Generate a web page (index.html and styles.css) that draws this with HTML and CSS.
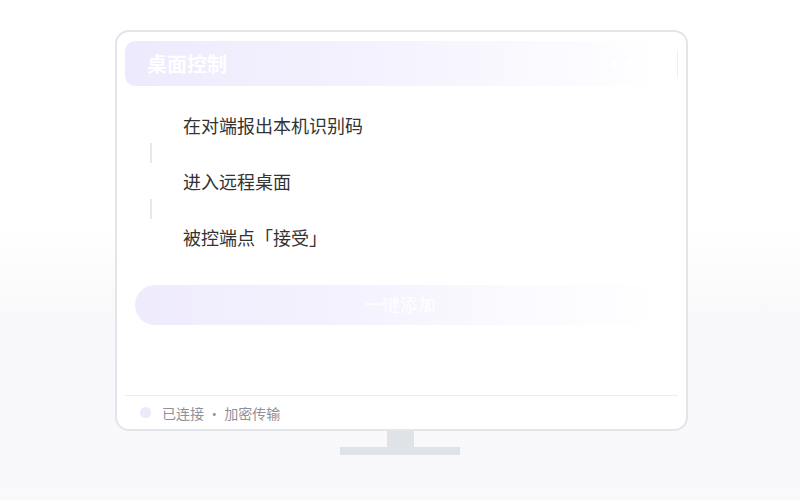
FILE: index.html
```html
<!DOCTYPE html>
<html>
	<head>
		<meta charset="UTF-8">
		<title>桌面控制</title>
		<link rel="stylesheet" href="styles.css">
	</head>
	<body>
		<div class="monitor">
			<div class="head">
				<div class="title">桌面控制</div>
				<div class="dots"><i></i><i></i><i></i></div>
			</div>
			<div class="steps">
				<div class="step"><span class="mark"></span><span>在对端报出本机识别码</span></div>
				<div class="link"></div>
				<div class="step"><span class="mark"></span><span>进入远程桌面</span></div>
				<div class="link"></div>
				<div class="step"><span class="mark"></span><span>被控端点「接受」</span></div>
			</div>
			<div class="btn">一键添加</div>
			<div class="foot">
				<span class="dot"></span>
				<span>已连接 · 加密传输</span>
			</div>
		</div>
		<div class="neck"></div>
		<div class="base"></div>
	</body>
</html>
```

FILE: styles.css
```css
*{
	margin:0;padding:0;
	box-sizing:border-box;
}
body{
	width:800px;
	height:500px;
	padding-top:30px;
	background:linear-gradient(#fff 0%,#fff 46%,#f8f8fa 64%,#f9f9fb 100%);
	font-family:"Noto Sans CJK SC","Noto Sans",sans-serif;
}
.monitor{
	width:573px;
	height:401px;
	margin:0 0 0 115px;
	border:2px solid #e2e5ea;
	border-radius:14px;
	background:#fff;
	display:flex;
	flex-direction:column;
	padding:9px 8px 0 8px;
}
.head{
	position:relative;
	height:45px;
	border-radius:10px;
	background:linear-gradient(90deg,#eeeafd 0%,#f4f2fe 45%,#fbfbff 80%,rgba(255,255,255,0) 97%);
	display:flex;
	align-items:center;
	justify-content:space-between;
	padding:0 22px;
}
.head::after{
	content:"";
	position:absolute;
	right:0;
	top:9px;
	width:1px;
	height:28px;
	background:#eeeff3;
}
.title{
	color:#fff;
	font-size:20px;
	font-weight:bold;
}
.dots{
	display:flex;
	gap:9px;
	margin-right:6px;
}
.dots i{
	width:7px;
	height:7px;
	border-radius:50%;
	background:#fff;
}
.steps{
	margin-top:21px;
	padding-left:15px;
}
.step{
	height:36px;
	display:flex;
	align-items:center;
	font-size:18px;
	color:#333;
}
.mark{
	width:24px;
	height:24px;
	margin-right:19px;
}
.link{
	height:20px;
	margin-left:10px;
	border-left:2px solid #e6e6ef;
}
.btn{
	margin:30px 0 0 10px;
	width:530px;
	height:40px;
	border-radius:20px;
	background:linear-gradient(90deg,#efebfd 0%,#f4f2fe 40%,#fbfbff 75%,rgba(255,255,255,0) 100%);
	color:#fff;
	font-family:serif;
	font-size:18px;
	line-height:40px;
	text-align:center;
}
.foot{
	margin-top:auto;
	height:34px;
	border-top:1px solid #ececf2;
	display:flex;
	align-items:center;
	padding-left:15px;
	font-size:14px;
	color:#8f909a;
}
.dot{
	width:11px;
	height:11px;
	border-radius:50%;
	background:#ece9fb;
	margin-right:11px;
}
.neck{
	width:27px;
	height:16px;
	margin-left:387px;
	background:#dfe3e8;
}
.base{
	width:120px;
	height:8px;
	margin-left:340px;
	background:#dfe3e8;
}
```
